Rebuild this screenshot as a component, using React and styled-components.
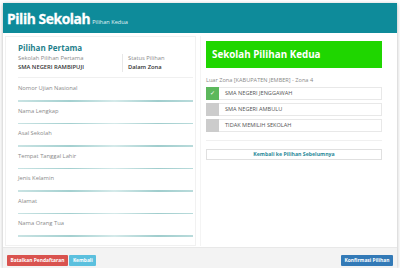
import React from "react"
import styled, { createGlobalStyle } from "styled-components"

const GlobalStyle = createGlobalStyle`
  html, body {
    margin: 0;
    padding: 0;
    background: #ffffff;
    font-family: "Open Sans", "Liberation Sans", sans-serif;
  }
  * {
    box-sizing: border-box;
  }
`

const Modal = styled.div`
  margin: 3px 0 0 3px;
  width: 394px;
  height: 265px;
  display: flex;
  flex-direction: column;
  background: #fff;
  box-shadow: 0 1px 4px rgba(0, 0, 0, 0.3);
`

const Header = styled.div`
  height: 30px;
  background: #0e8b9a;
  color: #fff;
  display: flex;
  align-items: baseline;
  padding: 6px 4px 0;
  h1 {
    margin: 0;
    font-size: 13.8px;
    font-weight: 700;
    line-height: 20px;
    letter-spacing: -0.4px;
    -webkit-text-stroke: 0.3px #fff;
  }
  small {
    margin-left: 2px;
    font-size: 5.6px;
    color: #e4f4f6;
  }
`

const Body = styled.div`
  flex: 1;
  display: grid;
  grid-template-columns: 191px 1fr;
  gap: 4px;
  padding: 3px 1px 1px 2px;
`

const LeftPanel = styled.div`
  border: 1px solid #f1f1f1;
  padding: 6px 2px 0 12px;
`

const PanelTitle = styled.h3`
  margin: 0;
  font-size: 8px;
  line-height: 10px;
  font-weight: 700;
  color: #1f7f8d;
`

const InfoRow = styled.div`
  display: grid;
  grid-template-columns: 104px 1fr;
  margin-top: 1px;
  padding-bottom: 5px;
  border-bottom: 1px solid #f0f0f0;
`

const InfoCell = styled.div`
  padding-left: ${(p) => (p.$divided ? "5px" : "0")};
  border-left: ${(p) => (p.$divided ? "1px solid #e8e8e8" : "none")};
`

const Label = styled.div`
  font-size: 5.8px;
  line-height: 9px;
  color: #8a8a8a;
`

const Value = styled.div`
  font-size: 5.8px;
  line-height: 9px;
  color: #333;
  font-weight: 600;
`

const Fields = styled.div`
  margin-top: 1px;
`

const Field = styled.div`
  position: relative;
  height: 22.5px;
  padding-top: 5px;
  &::after {
    content: "";
    position: absolute;
    left: 0;
    right: 0;
    bottom: 0;
    height: 1.5px;
    background: linear-gradient(to right, #c9e3e3, #a3d0d0 30%, #d5eaea 55%, #9fcdcd 80%, #b9dbdb);
  }
`

const FieldLabel = styled.div`
  font-size: 5.8px;
  line-height: 8px;
  color: #8a8a8a;
`

const RightPanel = styled.div`
  padding: 4.5px 14px 0 5px;
  border-left: 1px solid #f4f4f4;
`

const GreenBox = styled.div`
  height: 27px;
  background: #1fd600;
  color: #fff;
  display: flex;
  align-items: center;
  padding-left: 6px;
  font-size: 9.8px;
  font-weight: 700;
`

const ZoneText = styled.div`
  margin-top: 8.5px;
  font-size: 5.6px;
  line-height: 8px;
  color: #8a8a8a;
`

const Options = styled.div`
  margin-top: 3px;
  display: flex;
  flex-direction: column;
  gap: 3.5px;
  padding-bottom: 8px;
  border-bottom: 1px solid #f0f0f0;
`

const Option = styled.div`
  height: 12.5px;
  display: flex;
  align-items: center;
  border: 1px solid #e8e8e8;
  font-size: 5.6px;
  color: #555;
`

const Check = styled.span`
  width: 13px;
  align-self: stretch;
  margin: -1px 6px -1px -1px;
  background: ${(p) => (p.$on ? "#5cb85c" : "#cccccc")};
  display: flex;
  align-items: center;
  justify-content: center;
  color: #fff;
  font-size: 6px;
`

const BackButton = styled.div`
  margin-top: 8px;
  height: 11.5px;
  border: 1px solid #e0e0e0;
  display: flex;
  align-items: center;
  justify-content: center;
  font-size: 5.2px;
  font-weight: 700;
  color: #2a8a99;
`

const Footer = styled.div`
  height: 21px;
  background: #f3f3f3;
  border-top: 1px solid #e8e8e8;
  display: flex;
  align-items: flex-end;
  justify-content: space-between;
  padding: 0 4px 2px 4px;
`

const ButtonGroup = styled.div`
  display: flex;
  gap: 1.5px;
`

const Button = styled.div`
  height: 11.5px;
  padding: 0 3.5px;
  background: ${(p) => p.$bg};
  color: #fff;
  font-size: 4.9px;
  font-weight: 700;
  display: flex;
  align-items: center;
  border-radius: 1px;
`

const fields = [
  "Nomor Ujian Nasional",
  "Nama Lengkap",
  "Asal Sekolah",
  "Tempat Tanggal Lahir",
  "Jenis Kelamin",
  "Alamat",
  "Nama Orang Tua",
]

const options = [
  { name: "SMA NEGERI JENGGAWAH", on: true },
  { name: "SMA NEGERI AMBULU", on: false },
  { name: "TIDAK MEMILIH SEKOLAH", on: false },
]

export default function App() {
  return (
    <>
      <GlobalStyle />
      <Modal>
        <Header>
          <h1>Pilih Sekolah</h1>
          <small>Pilihan Kedua</small>
        </Header>
        <Body>
          <LeftPanel>
            <PanelTitle>Pilihan Pertama</PanelTitle>
            <InfoRow>
              <InfoCell>
                <Label>Sekolah Pilihan Pertama</Label>
                <Value>SMA NEGERI RAMBIPUJI</Value>
              </InfoCell>
              <InfoCell $divided>
                <Label>Status Pilihan</Label>
                <Value>Dalam Zona</Value>
              </InfoCell>
            </InfoRow>
            <Fields>
              {fields.map((f) => (
                <Field key={f}>
                  <FieldLabel>{f}</FieldLabel>
                </Field>
              ))}
            </Fields>
          </LeftPanel>
          <RightPanel>
            <GreenBox>Sekolah Pilihan Kedua</GreenBox>
            <ZoneText>Luar Zona [KABUPATEN JEMBER] - Zona 4</ZoneText>
            <Options>
              {options.map((o) => (
                <Option key={o.name}>
                  <Check $on={o.on}>{o.on ? "✓" : ""}</Check>
                  {o.name}
                </Option>
              ))}
            </Options>
            <BackButton>Kembali ke Pilihan Sebelumnya</BackButton>
          </RightPanel>
        </Body>
        <Footer>
          <ButtonGroup>
            <Button $bg="#d9534f">Batalkan Pendaftaran</Button>
            <Button $bg="#5bc0de">Kembali</Button>
          </ButtonGroup>
          <Button $bg="#337ab7">Konfirmasi Pilihan</Button>
        </Footer>
      </Modal>
    </>
  )
}
